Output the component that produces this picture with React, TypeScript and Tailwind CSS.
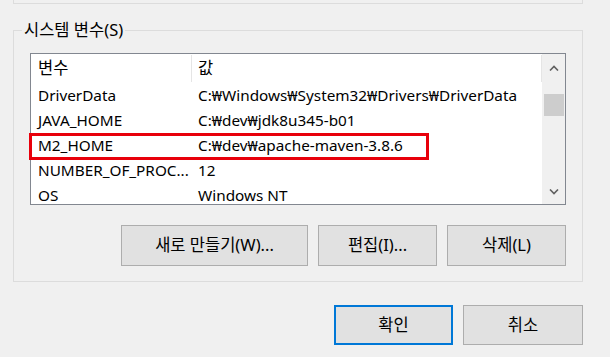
import React from "react";

const rows = [
  { name: "DriverData", value: "C:₩Windows₩System32₩Drivers₩DriverData" },
  { name: "JAVA_HOME", value: "C:₩dev₩jdk8u345-b01" },
  { name: "M2_HOME", value: "C:₩dev₩apache-maven-3.8.6" },
  { name: "NUMBER_OF_PROC...", value: "12" },
  { name: "OS", value: "Windows NT" },
];

function Chevron({ up }: { up?: boolean }) {
  return (
    <svg width="10" height="6" viewBox="0 0 10 6" className="block">
      <polyline
        points={up ? "1,5.5 5,1.5 9,5.5" : "1,0.5 5,4.5 9,0.5"}
        fill="none"
        stroke="#606060"
        strokeWidth="1.6"
      />
    </svg>
  );
}

function WinButton({ label, w, h, primary }: { label: string; w: string; h: string; primary?: boolean }) {
  return (
    <button
      className={
        primary
          ? `${w} ${h} bg-[#e1e1e1] border-2 border-[#0078d7] text-[16.5px] text-black`
          : `${w} ${h} bg-[#e1e1e1] border border-[#adadad] text-[16.5px] text-black`
      }
    >
      {label}
    </button>
  );
}

export default function App() {
  return (
    <div className="w-[610px] h-[357px] bg-[#f0f0f0] overflow-hidden text-black font-['Noto_Sans','Noto_Sans_CJK_KR',sans-serif]">
      {/* previous group box bottom edge */}
      <div className="ml-[13px] w-[570px] h-[4px] border-x border-b border-[#dcdcdc]" />

      {/* 시스템 변수 group */}
      <div className="relative ml-[13px] mt-[26px] w-[570px] h-[252px] border border-[#dcdcdc]">
        <span className="absolute -top-[13px] left-[8px] px-[2px] bg-[#f0f0f0] text-[16.5px] leading-[24px]">
          시스템 변수(S)
        </span>

        <div className="mt-[22px] ml-[16px] w-[536px] h-[152px] border border-[#828790] bg-white flex overflow-hidden">
          <div className="flex-1 flex flex-col text-[15.3px]">
            <div className="h-[29px] shrink-0 flex items-stretch text-[16.5px]">
              <div className="w-[160px] pl-[7px] flex items-center">변수</div>
              <div className="w-px my-[1px] bg-[#e5e5e5]" />
              <div className="flex-1 pl-[6px] flex items-center">값</div>
              <div className="w-px my-[1px] bg-[#e5e5e5]" />
            </div>
            {rows.map((r) => (
              <div key={r.name} className="h-[25px] shrink-0 flex items-center whitespace-nowrap">
                <div className="w-[161px] pl-[7px]">{r.name}</div>
                <div className="flex-1 pl-[6px]">{r.value}</div>
              </div>
            ))}
          </div>

          {/* scrollbar */}
          <div className="w-[23px] shrink-0 bg-[#f0f0f0] flex flex-col items-center">
            <div className="h-[27px] flex items-center justify-center">
              <Chevron up />
            </div>
            <div className="mt-[13px] w-[20px] h-[22px] bg-[#cdcdcd]" />
            <div className="flex-1" />
            <div className="h-[24px] flex items-center justify-center">
              <Chevron />
            </div>
          </div>
        </div>

        <div className="mt-[20px] ml-[107px] flex gap-[10px]">
          <WinButton label="새로 만들기(W)..." w="w-[187px]" h="h-[41px]" />
          <WinButton label="편집(I)..." w="w-[119px]" h="h-[41px]" />
          <WinButton label="삭제(L)" w="w-[119px]" h="h-[41px]" />
        </div>

        {/* red annotation box around M2_HOME */}
        <div className="absolute left-[15px] top-[102px] w-[400px] h-[27px] border-[3px] border-[#e8000b] pointer-events-none" />
      </div>

      <div className="mt-[23px] ml-[334px] flex gap-[10px]">
        <WinButton label="확인" w="w-[119px]" h="h-[40px]" primary />
        <WinButton label="취소" w="w-[120px]" h="h-[40px]" />
      </div>
    </div>
  );
}
